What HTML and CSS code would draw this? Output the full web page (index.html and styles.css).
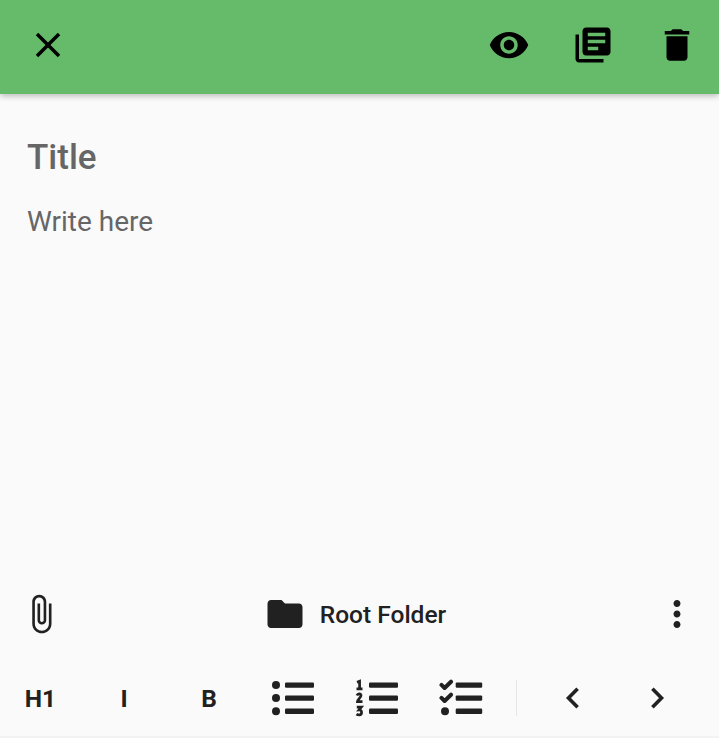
FILE: index.html
```html
<!DOCTYPE html>
<html lang="en">
<head>
<meta charset="utf-8">
<title>Note editor</title>
<link rel="stylesheet" href="styles.css">
</head>
<body>
<div class="app">
  <header class="appbar">
    <button class="cell" aria-label="Close"><svg class="icon" viewBox="0 0 24 24"><path d="M19 6.41L17.59 5 12 10.59 6.41 5 5 6.41 10.59 12 5 17.59 6.41 19 12 13.41 17.59 19 19 17.59 13.41 12z"/></svg></button>
    <div class="actions">
      <button class="cell" aria-label="Preview"><svg class="icon" viewBox="0 0 24 24"><path d="M12 4.5C7 4.5 2.73 7.61 1 12c1.73 4.39 6 7.5 11 7.5s9.27-3.11 11-7.5c-1.73-4.39-6-7.5-11-7.5zM12 17c-2.76 0-5-2.24-5-5s2.24-5 5-5 5 2.24 5 5-2.24 5-5 5zm0-8c-1.66 0-3 1.34-3 3s1.34 3 3 3 3-1.34 3-3-1.34-3-3-3z"/></svg></button>
      <button class="cell" aria-label="Notes"><svg class="icon" viewBox="0 0 24 24"><path d="M4 6H2v14c0 1.1.9 2 2 2h14v-2H4V6zm16-4H8c-1.1 0-2 .9-2 2v12c0 1.1.9 2 2 2h12c1.1 0 2-.9 2-2V4c0-1.1-.9-2-2-2zm-1 9H9V9h10v2zm-4 4H9v-2h6v2zm4-8H9V5h10v2z"/></svg></button>
      <button class="cell" aria-label="Delete"><svg class="icon" viewBox="0 0 24 24"><path d="M6 19c0 1.1.9 2 2 2h8c1.1 0 2-.9 2-2V7H6v12zM19 4h-3.5l-1-1h-5l-1 1H5v2h14V4z"/></svg></button>
    </div>
  </header>
  <main class="note">
    <h1 class="title">Title</h1>
    <p class="body">Write here</p>
  </main>
  <footer class="tools">
    <div class="meta">
      <button class="side" aria-label="Attach"><svg class="icon" viewBox="0 0 24 24"><path d="M16.5 6v11.5c0 2.21-1.79 4-4 4s-4-1.79-4-4V5c0-1.38 1.12-2.5 2.5-2.5s2.5 1.12 2.5 2.5v10.5c0 .55-.45 1-1 1s-1-.45-1-1V6H10v9.5c0 1.38 1.12 2.5 2.5 2.5s2.5-1.12 2.5-2.5V5c0-2.21-1.79-4-4-4S7 2.79 7 5v12.5c0 3.04 2.46 5.5 5.5 5.5s5.5-2.46 5.5-5.5V6h-1.5z"/></svg></button>
      <button class="folder"><svg class="icon" viewBox="0 0 24 24"><path d="M10 4H4c-1.1 0-1.99.9-1.99 2L2 18c0 1.1.9 2 2 2h16c1.1 0 2-.9 2-2V8c0-1.1-.9-2-2-2h-8l-2-2z"/></svg><span>Root Folder</span></button>
      <button class="side" aria-label="More"><svg class="icon" viewBox="0 0 24 24"><path d="M12 8c1.1 0 2-.9 2-2s-.9-2-2-2-2 .9-2 2 .9 2 2 2zm0 2c-1.1 0-2 .9-2 2s.9 2 2 2 2-.9 2-2-.9-2-2-2zm0 6c-1.1 0-2 .9-2 2s.9 2 2 2 2-.9 2-2-.9-2-2-2z"/></svg></button>
    </div>
    <div class="format">
      <button class="cell">H1</button>
      <button class="cell">I</button>
      <button class="cell">B</button>
      <button class="cell" aria-label="Bulleted list"><svg class="list" viewBox="0 0 44 40"><circle cx="5" cy="7" r="4"/><circle cx="5" cy="20" r="4"/><circle cx="5" cy="33.3" r="4"/><rect x="14" y="4.4" width="29" height="5.3" rx="1.2"/><rect x="14" y="17.4" width="29" height="5.3" rx="1.2"/><rect x="14" y="30.6" width="29" height="5.3" rx="1.2"/></svg></button>
      <button class="cell" aria-label="Numbered list"><svg class="list" viewBox="0 0 44 40"><path class="digit" d="M2 4.2L4.6 3.2V11M1.5 10.8H7.5M1.9 17.5C2.9 15 6.3 15.5 6 17.7C5.8 19.5 2.8 21.5 2.5 23.6H7.5M1.8 29.2H6.3L4.1 31.9C7.3 31.6 7.5 36.8 4.2 36.9C3.1 36.9 2.3 36.7 1.5 36.1"/><rect x="14" y="4.4" width="29" height="5.3" rx="1.2"/><rect x="14" y="17.4" width="29" height="5.3" rx="1.2"/><rect x="14" y="30.6" width="29" height="5.3" rx="1.2"/></svg></button>
      <button class="cell" aria-label="Checklist"><svg class="list" viewBox="0 0 44 40"><path class="check" d="M2.5 6.9L5.6 10L12 3.7M2.5 19.9L5.6 23L12 16.7"/><circle cx="6" cy="33.3" r="4"/><rect x="16.7" y="4.4" width="26.5" height="5.3" rx="1.2"/><rect x="16.7" y="17.4" width="26.5" height="5.3" rx="1.2"/><rect x="16.7" y="30.6" width="26.5" height="5.3" rx="1.2"/></svg></button>
      <span class="divider"></span>
      <button class="cell" aria-label="Previous"><svg class="chevron" viewBox="0 0 20 24"><path d="M14.6 2.8L5.5 12L14.6 21.2"/></svg></button>
      <button class="cell" aria-label="Next"><svg class="chevron" viewBox="0 0 20 24"><path d="M5.4 2.8L14.5 12L5.4 21.2"/></svg></button>
    </div>
  </footer>
</div>
</body>
</html>
```
FILE: styles.css
```css
* { box-sizing: border-box; }
body { margin: 0; font-family: Roboto, sans-serif; background: #fafafa; }
button { border: 0; padding: 0; background: none; color: inherit; font: inherit; }
svg { display: block; flex: none; fill: currentColor; }
.app { display: flex; flex-direction: column; height: 738px; overflow: hidden; border-bottom: 2px solid #f3f3f3; }
.appbar { display: flex; justify-content: space-between; flex: none; height: 94px; padding: 3px 0 7px 6px; background: #66bb6a; color: #000; box-shadow: 0 2px 6px rgba(0, 0, 0, .26); }
.actions { display: flex; }
.cell { display: flex; align-items: center; justify-content: center; width: 84px; flex: none; }
.appbar .cell { height: 84px; }
.icon { width: 42px; height: 42px; }
.note { flex: 1; padding: 43px 27px 0; color: #666; }
.title { margin: 0; font-size: 35px; font-weight: 500; line-height: 41px; }
.body { margin: 27px 0 0; font-size: 28px; line-height: 34px; }
.tools { flex: none; color: #212121; }
.meta { display: flex; align-items: center; justify-content: space-between; height: 82px; padding-left: 20px; padding-right: 21px; }
.side { flex: none; }
.folder { display: flex; align-items: center; gap: 14px; margin-right: 8px; font-size: 24.5px; font-weight: 500; }
.format { display: flex; align-items: center; height: 81px; padding-top: 5px; font-size: 24.5px; font-weight: 700; }
.format .cell { height: 76px; }
.format .cell:first-child { width: 83px; padding-right: 2px; }
.format .cell:nth-child(2) { padding-right: 2px; }
.list { width: 44px; height: 40px; }
.digit { fill: none; stroke: currentColor; stroke-width: 2.7; }
.check { fill: none; stroke: currentColor; stroke-width: 4; stroke-linecap: round; stroke-linejoin: round; }
.divider { width: 1px; height: 36px; margin: 0 14px 0 13px; background: #e6e6e6; }
.chevron { width: 20px; height: 24px; fill: none; stroke: currentColor; stroke-width: 3.6; }
```
